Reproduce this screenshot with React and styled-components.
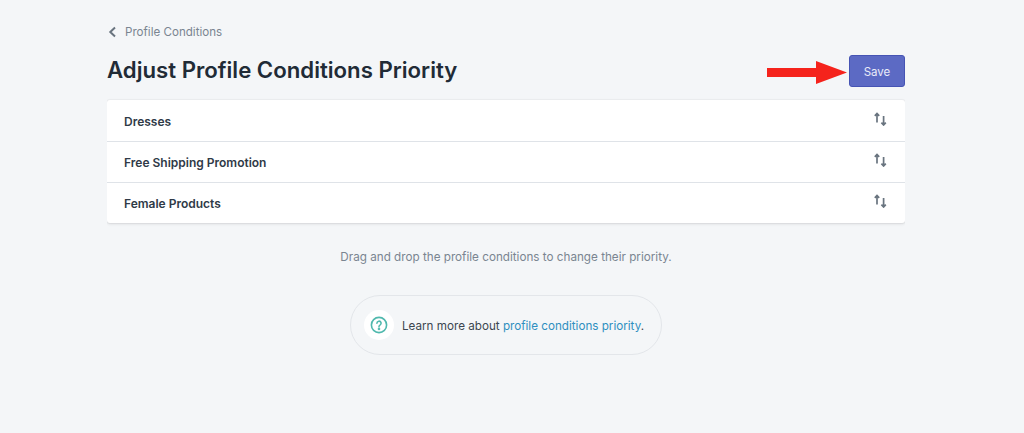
import React from "react";
import styled, { createGlobalStyle } from "styled-components";

const Global = createGlobalStyle`
  html, body { margin: 0; padding: 0; background: #f4f6f8; }
  body { font-family: Inter, "Liberation Sans", sans-serif; -webkit-font-smoothing: antialiased; }
`;

const Page = styled.div`
  width: 798px;
  height: 433px;
  margin-left: 107px;
  padding-top: 24px;
  box-sizing: border-box;
  overflow: hidden;
`;

const Breadcrumb = styled.a`
  display: flex;
  align-items: center;
  gap: 9px;
  height: 15px;
  padding-top: 1px;
  box-sizing: border-box;
  font-size: 11.6px;
  line-height: 15px;
  color: #7a8591;
`;

const Header = styled.div`
  display: flex;
  align-items: flex-start;
  justify-content: space-between;
  height: 32px;
  margin-top: 16px;
`;

const Title = styled.h1`
  margin: 0;
  font-size: 22.2px;
  line-height: 30px;
  font-weight: 600;
  color: #212b36;
`;

const Actions = styled.div`
  display: flex;
  align-items: center;
  gap: 2px;
`;

const ArrowWrap = styled.span`
  display: flex;
  margin-top: 3px;
`;

const SaveButton = styled.button`
  width: 56px;
  height: 32px;
  padding: 2px 0 0;
  border: 1px solid #4654b4;
  border-radius: 3px;
  background: #5c6ac4;
  color: #e9ebf8;
  font-family: inherit;
  font-size: 11.5px;
`;

const Card = styled.div`
  margin-top: 13px;
  background: #fff;
  border-radius: 3px;
  box-shadow: 0 0 0 1px rgba(63, 63, 68, 0.03), 0 1px 3px rgba(63, 63, 68, 0.15);
`;

const Row = styled.div`
  display: flex;
  align-items: center;
  justify-content: space-between;
  height: 41px;
  padding: ${(p) => (p.$first ? "1px" : "0")} 17px 0;
  box-sizing: border-box;
  border-top: ${(p) => (p.$first ? "none" : "1px solid #dfe3e8")};
`;

const RowLabel = styled.span`
  font-size: 12px;
  font-weight: 600;
  color: #2f3a47;
`;

const Handle = styled.span`
  display: flex;
  margin-top: -5px;
  color: #69747f;
`;

const Hint = styled.p`
  margin: 27px 0 0;
  height: 15px;
  font-size: 11.7px;
  line-height: 15px;
  text-align: center;
  color: #7a8591;
`;

const Footer = styled.div`
  display: flex;
  justify-content: center;
  margin-top: 30px;
`;

const Pill = styled.div`
  display: flex;
  align-items: center;
  gap: 8px;
  width: 312px;
  height: 60px;
  padding-left: 13px;
  box-sizing: border-box;
  border: 1px solid #e3e6ea;
  border-radius: 30px;
  font-size: 11.67px;
  color: #3c4650;
`;

const IconDisc = styled.span`
  display: flex;
  align-items: center;
  justify-content: center;
  width: 30px;
  height: 30px;
  border-radius: 50%;
  background: #fff;
`;

const PillText = styled.span`
  padding-top: 2px;
`;

const Link = styled.a`
  color: #2f8fc0;
`;

const Chevron = () => (
  <svg width="9" height="12" viewBox="0 0 9 12" fill="none" stroke="#69747f" strokeWidth="2">
    <path d="M8 1.5 3.3 6 8 10.5" />
  </svg>
);

const SortIcon = () => (
  <svg width="14" height="14" viewBox="0 0 14 14" fill="none" stroke="currentColor" strokeWidth="1.7">
    <path d="M3 10.5V1.5M.8 3.8 3 1.5l2.2 2.3" />
    <path d="M9.6 4v9M7.4 10.7 9.6 13l2.2-2.3" />
  </svg>
);

const Arrow = () => (
  <svg width="80" height="23" viewBox="0 0 80 23">
    <path d="M0 7h49V0l31 11.5L49 23v-7H0z" fill="#f5231c" />
  </svg>
);

const HelpIcon = () => (
  <svg width="18" height="18" viewBox="0 0 18 18" fill="none" stroke="#4fb8ad" strokeWidth="1.6">
    <circle cx="9" cy="9" r="7.6" />
    <path d="M6.9 7.2a2.1 2.1 0 1 1 3.1 1.9c-.7.4-1 .8-1 1.5" strokeLinecap="round" />
    <circle cx="9" cy="12.9" r=".5" />
  </svg>
);

const rows = ["Dresses", "Free Shipping Promotion", "Female Products"];

export default function App() {
  return (
    <>
      <Global />
      <Page>
        <Breadcrumb>
          <Chevron />
          Profile Conditions
        </Breadcrumb>
        <Header>
          <Title>Adjust Profile Conditions Priority</Title>
          <Actions>
            <ArrowWrap>
              <Arrow />
            </ArrowWrap>
            <SaveButton>Save</SaveButton>
          </Actions>
        </Header>
        <Card>
          {rows.map((r, i) => (
            <Row key={r} $first={i === 0}>
              <RowLabel>{r}</RowLabel>
              <Handle>
                <SortIcon />
              </Handle>
            </Row>
          ))}
        </Card>
        <Hint>Drag and drop the profile conditions to change their priority.</Hint>
        <Footer>
          <Pill>
            <IconDisc>
              <HelpIcon />
            </IconDisc>
            <PillText>
              Learn more about <Link>profile conditions priority</Link>.
            </PillText>
          </Pill>
        </Footer>
      </Page>
    </>
  );
}
